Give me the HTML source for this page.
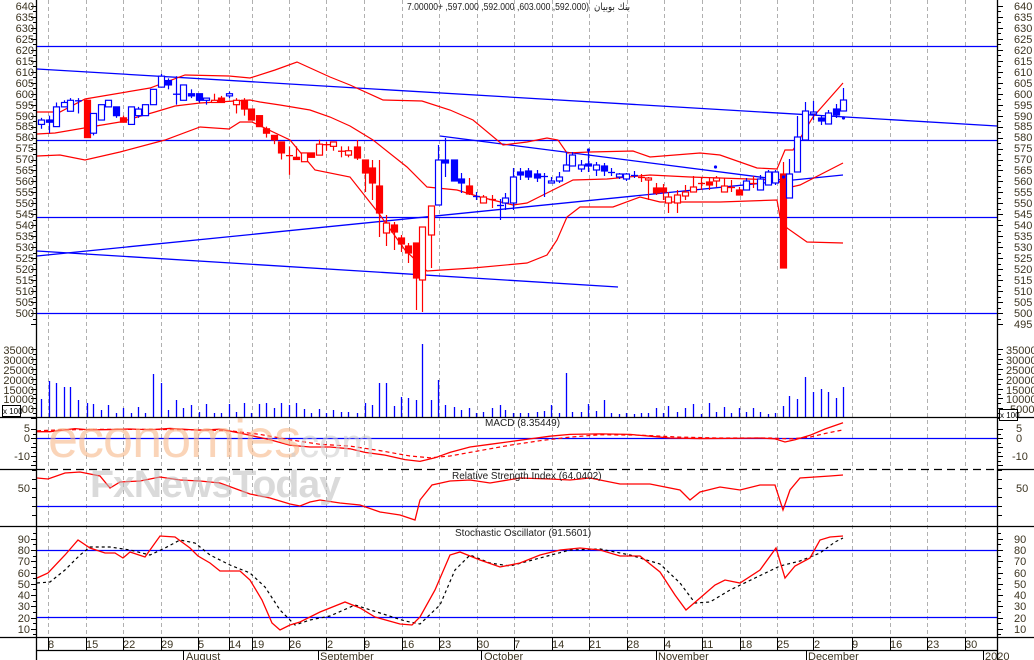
<!DOCTYPE html>
<html><head><meta charset="utf-8"><style>
html,body{margin:0;padding:0;background:#fff;width:1034px;height:660px;overflow:hidden}
svg{display:block;font-family:"Liberation Sans","DejaVu Sans",sans-serif}
.ax{font-size:11px;fill:#3b3320}
.al text{text-anchor:end}
.t{font-size:10px;fill:#222}
</style></head><body>
<svg id="s" width="1034" height="660" viewBox="0 0 1034 660" xmlns="http://www.w3.org/2000/svg">
<rect width="1034" height="660" fill="#fff"/>
<g id="grid"></g>
<g id="lines"></g>
<g id="cand"></g>
<g id="vol"></g>
<g id="ind"></g>
<!-- watermark -->
<text x="48" y="457" font-size="54" fill="#f7b98a" opacity="0.6" font-family="Liberation Sans,sans-serif" letter-spacing="-1">economies</text>
<text x="288" y="457" font-size="40" fill="#cfcfcf" opacity="0.6" font-family="Liberation Sans,sans-serif">.com</text>
<text x="90" y="497" font-size="38" fill="#bdbdbd" opacity="0.55" font-family="Liberation Sans,sans-serif" font-weight="bold" letter-spacing="-1" textLength="250" lengthAdjust="spacingAndGlyphs">FxNewsToday</text>
<!-- axes -->
<g stroke="#000" stroke-width="1.3" fill="none">
<line x1="36.5" y1="0" x2="36.5" y2="660"/>
<line x1="997.5" y1="0" x2="997.5" y2="660"/>
<line x1="0" y1="417.5" x2="1034" y2="417.5"/>
<line x1="0" y1="526.5" x2="1034" y2="526.5"/>
<line x1="0" y1="637.5" x2="1034" y2="637.5"/>
<line x1="37" y1="650.5" x2="997" y2="650.5"/>
<line x1="0" y1="469.5" x2="37" y2="469.5"/>
<line x1="997" y1="469.5" x2="1034" y2="469.5"/>
<line x1="37" y1="469.5" x2="997" y2="469.5" stroke-dasharray="8,5"/>
</g>
<g id="ticks"></g>
<!-- title -->
<text x="407" y="10" class="t" font-size="10" textLength="182" lengthAdjust="spacingAndGlyphs">7.00000+ ,597.000 ,592.000 ,603.000 ,592.000)</text>
<text x="594" y="10" class="t" font-size="9" font-family="DejaVu Sans,sans-serif" textLength="36" lengthAdjust="spacingAndGlyphs">بنك بوبيان</text>
<text x="485" y="426" class="t">MACD (8.35449)</text>
<text x="452" y="479" class="t">Relative Strength Index (64.0402)</text>
<text x="455" y="536" class="t">Stochastic Oscillator (91.5601)</text>
<!-- left price labels -->
<g class="ax al">
<text x="34" y="10">640</text><text x="34" y="21">635</text><text x="34" y="32">630</text><text x="34" y="43">625</text><text x="34" y="54">620</text><text x="34" y="65">615</text><text x="34" y="76">610</text><text x="34" y="87">605</text><text x="34" y="98">600</text><text x="34" y="109">595</text><text x="34" y="120">590</text><text x="34" y="130">585</text><text x="34" y="141">580</text><text x="34" y="152">575</text><text x="34" y="163">570</text><text x="34" y="174">565</text><text x="34" y="185">560</text><text x="34" y="196">555</text><text x="34" y="207">550</text><text x="34" y="218">545</text><text x="34" y="229">540</text><text x="34" y="240">535</text><text x="34" y="251">530</text><text x="34" y="262">525</text><text x="34" y="273">520</text><text x="34" y="284">515</text><text x="34" y="295">510</text><text x="34" y="306">505</text><text x="34" y="317">500</text>
<text x="34" y="354">35000</text><text x="34" y="364">30000</text><text x="34" y="374">25000</text><text x="34" y="384">20000</text><text x="34" y="394">15000</text><text x="34" y="403">10000</text><text x="34" y="413">5000</text>
<text x="30" y="432">5</text><text x="30" y="442">0</text><text x="30" y="460">-10</text>
<text x="30" y="492">50</text>
<text x="30" y="543">90</text><text x="30" y="554">80</text><text x="30" y="565">70</text><text x="30" y="577">60</text><text x="30" y="588">50</text><text x="30" y="599">40</text><text x="30" y="610">30</text><text x="30" y="622">20</text><text x="30" y="633">10</text>
</g>
<g class="ax">
<text x="1014" y="10">640</text><text x="1014" y="21">635</text><text x="1014" y="32">630</text><text x="1014" y="43">625</text><text x="1014" y="54">620</text><text x="1014" y="65">615</text><text x="1014" y="76">610</text><text x="1014" y="87">605</text><text x="1014" y="98">600</text><text x="1014" y="109">595</text><text x="1014" y="120">590</text><text x="1014" y="130">585</text><text x="1014" y="141">580</text><text x="1014" y="152">575</text><text x="1014" y="163">570</text><text x="1014" y="174">565</text><text x="1014" y="185">560</text><text x="1014" y="196">555</text><text x="1014" y="207">550</text><text x="1014" y="218">545</text><text x="1014" y="229">540</text><text x="1014" y="240">535</text><text x="1014" y="251">530</text><text x="1014" y="262">525</text><text x="1014" y="273">520</text><text x="1014" y="284">515</text><text x="1014" y="295">510</text><text x="1014" y="306">505</text><text x="1014" y="317">500</text><text x="1014" y="328">495</text>
<text x="1006" y="354">35000</text><text x="1006" y="364">30000</text><text x="1006" y="374">25000</text><text x="1006" y="384">20000</text><text x="1006" y="394">15000</text><text x="1006" y="403">10000</text><text x="1010" y="413">5000</text>
<text x="1016" y="432">5</text><text x="1016" y="442">0</text><text x="1012" y="460">-10</text>
<text x="1016" y="492">50</text>
<text x="1014" y="543">90</text><text x="1014" y="554">80</text><text x="1014" y="565">70</text><text x="1014" y="577">60</text><text x="1014" y="588">50</text><text x="1014" y="599">40</text><text x="1014" y="610">30</text><text x="1014" y="622">20</text><text x="1014" y="633">10</text>
</g>
<rect x="2.5" y="405.5" width="18" height="11" fill="#fff" stroke="#000"/>
<text x="3" y="414" font-size="8" fill="#000">x 100</text>
<rect x="999.5" y="409.5" width="18" height="11" fill="#fff" stroke="#000"/>
<text x="1000" y="418" font-size="8" fill="#000">x 100</text>
<!-- date axis -->
<g class="ax" font-size="11">
<text x="48" y="648">8</text><text x="86" y="648">15</text><text x="123" y="648">22</text><text x="161" y="648">29</text><text x="198" y="648">5</text><text x="229" y="648">14</text><text x="252" y="648">19</text><text x="289" y="648">26</text><text x="327" y="648">2</text><text x="364" y="648">9</text><text x="402" y="648">16</text><text x="439" y="648">23</text><text x="477" y="648">30</text><text x="514" y="648">7</text><text x="552" y="648">14</text><text x="589" y="648">21</text><text x="627" y="648">28</text><text x="665" y="648">4</text><text x="702" y="648">11</text><text x="740" y="648">18</text><text x="777" y="648">25</text><text x="814" y="648">2</text><text x="852" y="648">9</text><text x="890" y="648">16</text><text x="927" y="648">23</text><text x="965" y="648">30</text><text x="985" y="660">2020</text>
</g>
<g class="ax" font-size="10">
<text x="186" y="660">August</text><text x="320" y="660">September</text><text x="484" y="660">October</text><text x="658" y="660">November</text><text x="808" y="660">December</text>
</g>
<g id="dt" stroke="#000" stroke-width="1"></g>
</svg>
<script>
var NS="http://www.w3.org/2000/svg";
function el(p,t,a){var e=document.createElementNS(NS,t);for(var k in a)e.setAttribute(k,a[k]);document.getElementById(p).appendChild(e);return e;}
function P(p){return 6+(640-p)*2.193;}
var gx=[48,86,123,161,198,229,252,289,326,364,402,439,477,514,552,589,627,664,702,740,777,813,852,890,927,965];
gx.forEach(function(x){el("grid","line",{x1:x+.5,y1:0,x2:x+.5,y2:637,stroke:"#b0b0b0","stroke-dasharray":"4,3"});
 el("dt","line",{x1:x+.5,y1:637,x2:x+.5,y2:650});});
[183,318,481,656,806,983].forEach(function(x){el("dt","line",{x1:x+.5,y1:650,x2:x+.5,y2:660});});
function tk(y,len){el("ticks","line",{x1:36-len,y1:y,x2:37,y2:y,stroke:"#000"});el("ticks","line",{x1:997,y1:y,x2:998+len,y2:y,stroke:"#000"});}
for(var p=640;p>=495;p-=2.5)tk(Math.round(P(p))+.5,p%5==0?5:3);
for(var v=0;v<=35000;v+=2500)tk(Math.round(418-v*0.00196)+.5,v%5000==0?5:3);
for(var m=-15;m<=7;m+=2.5)tk(Math.round(438-m*1.8)+.5,m%5==0?5:3);
for(var r=20;r<=70;r+=10)tk(Math.round(533-r*0.9)+.5,4);
for(var s=5;s<=95;s+=5)tk(Math.round(640-s*1.125)+.5,s%10==0?5:3);
function pl(g,pts,col,w,dash){var a={points:pts.map(function(q){return q.join(",")}).join(" "),fill:"none",stroke:col,"stroke-width":w||1.3};if(dash)a["stroke-dasharray"]=dash;el(g,"polyline",a);}
var B="#0000ff",R="#ff0000";
[46,140,217,313].forEach(function(y){el("lines","line",{x1:37,y1:y+.5,x2:997,y2:y+.5,stroke:B,"stroke-width":1.3});});
pl("lines",[[37,69],[997,126]],B);
pl("lines",[[37,256],[843,175]],B);
pl("lines",[[37,251],[618,287]],B);
pl("lines",[[440,136],[783,180]],B);
pl("lines",[[37,112],[60,112],[85,99],[150,88],[185,75],[229,76],[250,78],[275,70],[297,62],[330,77],[350,85],[383,100],[422,101],[450,110],[473,120],[503,145],[527,142],[547,138],[558,140],[567,153],[590,152],[633,151],[650,157],[700,153],[720,155],[757,168],[777,169],[785,150],[793,150],[813,117],[843,83]],R,1.2);
pl("lines",[[37,134],[55,133],[90,127],[120,122],[155,112],[175,106],[200,103],[235,101],[250,100],[260,102],[280,105],[310,110],[330,117],[350,126],[373,140],[407,167],[427,187],[457,190],[480,197],[513,205],[527,203],[547,193],[573,180],[607,179],[650,175],[690,177],[720,178],[777,180],[787,188],[800,185],[843,163]],R,1.2);
pl("lines",[[37,156],[60,155],[85,160],[120,152],[165,140],[200,127],[229,129],[240,122],[252,122],[290,140],[315,170],[350,177],[380,215],[405,250],[427,271],[473,268],[527,263],[547,255],[557,240],[567,217],[580,207],[613,207],[640,197],[660,202],[720,202],[777,200],[780,217],[787,228],[807,242],[843,243]],R,1.2);
var A=[[41,588,586,589,584,"bh"],[49,588,587,590,582,"bf"],[56,594,585,596,585,"bh"],[64,596,594,597,594,"bh"],[70,597,592,598,592,"bh"],[78,597,597,598,591,"bc"],[87,597,580,597,580,"rf"],[93,591,582,591,581,"bh"],[101,595,588,595,588,"bh"],[108,597,594,597,594,"bh"],[116,594,590,594,589,"bf"],[123,589,587,590,587,"rf"],[131,594,586,594,586,"bh"],[138,593,590,594,589,"bh"],[145,595,590,595,590,"bh"],[153,602,595,602,595,"bh"],[161,608,603,609,603,"bh"],[168,606,604,607,602,"bf"],[176,600,600,608,595,"bc"],[183,604,597,604,597,"bh"],[191,600,599,602,598,"bf"],[199,600,597,600,596,"bf"],[206,598,597,598,595,"bh"],[214,597,596,600,596,"rh"],[221,598,596,599,596,"rf"],[229,600,599,601,598,"bh"],[236,597,595,598,591,"rh"],[244,597,593,598,590,"rf"],[251,593,588,593,588,"rf"],[259,590,585,590,585,"rf"],[266,584,582,585,580,"rf"],[274,581,579,581,577,"rf"],[281,578,573,578,570,"rf"],[289,572,572,576,563,"rc"],[296,571,570,576,570,"rf"],[304,573,569,573,569,"rh"],[311,573,571,573,571,"rf"],[319,577,572,579,572,"rh"],[326,577,577,578,574,"rc"],[333,578,576,578,574,"rh"],[341,574,574,576,571,"rc"],[348,574,572,576,571,"rh"]];
var C=[];A.forEach(function(a){C.push([a[0],P(a[1]),P(a[2]),P(a[3]),P(a[4]),a[5]]);});
var Bp=[[357,147,158,140,160,"rf"],[365,160,173,160,192,"rf"],[372,168,183,160,200,"rf"],[379,186,213,160,237,"rf"],[386,223,233,215,246,"rh"],[394,225,232,222,250,"rf"],[401,238,244,235,252,"rf"],[408,246,253,243,263,"rf"],[416,243,278,243,310,"rf"],[422,227,280,227,312,"rh"],[431,206,235,206,268,"rh"],[438,160,205,145,205,"bh"],[445,160,163,138,177,"bf"],[454,160,181,160,181,"bf"],[461,179,183,173,193,"bf"],[469,186,194,178,195,"rf"],[476,196,197,192,200,"bc"],[483,197,203,195,203,"rh"],[492,199,201,195,208,"rc"],[500,205,205,199,220,"bc"],[505,198,203,193,210,"bh"],[513,177,203,168,210,"bh"],[520,172,175,168,180,"bf"],[528,171,177,168,180,"bf"],[537,174,178,170,182,"bf"],[544,176,176,173,197,"bc"],[551,181,183,177,183,"bh"],[559,177,181,172,183,"bh"],[566,165,171,152,171,"bh"],[572,155,166,152,166,"bh"],[581,165,169,160,172,"bh"],[588,164,166,149,172,"bf"],[596,165,170,162,176,"bh"],[604,166,171,163,176,"bf"],[611,172,172,168,176,"bc"],[619,174,177,173,179,"bh"],[626,174,179,173,181,"bh"],[634,175,175,171,178,"bc"],[641,177,177,174,182,"rc"],[648,178,180,177,200,"rh"],[656,188,193,183,195,"rf"],[663,188,192,184,200,"rf"],[668,197,203,192,213,"rh"],[677,195,203,190,213,"rh"],[685,192,196,185,200,"rh"],[693,187,192,176,192,"rh"],[701,183,183,178,190,"rc"],[709,182,185,178,190,"rf"],[716,178,181,176,187,"rh"],[724,186,192,178,192,"rh"],[731,187,187,180,192,"rc"],[739,190,195,187,195,"rf"],[746,181,190,178,190,"bh"],[753,183,183,176,188,"rc"],[760,179,190,175,190,"bh"],[768,172,185,170,185,"bh"],[775,172,183,170,185,"bh"],[783,174,268,162,268,"rf"],[789,174,198,159,198,"bh"],[797,137,172,116,172,"bh"],[805,111,140,102,140,"bh"],[813,112,114,101,120,"bh"],[821,118,121,115,125,"bf"],[828,113,124,110,124,"bh"],[836,109,115,104,118,"bf"],[843,100,111,88,111,"bh"]];
C=C.concat(Bp);
C.forEach(function(c){var x=c[0],t=Math.min(c[1],c[2]),b=Math.max(c[1],c[2]),col=c[5][0]=="b"?B:R,k=c[5][1];
 el("cand","line",{x1:x+.5,y1:c[3],x2:x+.5,y2:c[4],stroke:col,"stroke-width":1.2});
 if(k=="c"||b-t<1.5){el("cand","line",{x1:x-3,y1:t+.5,x2:x+4,y2:t+.5,stroke:col,"stroke-width":1.3});if(k=="c")return;}
 el("cand","rect",{x:x-2.5,y:t,width:6,height:Math.max(b-t,2),fill:k=="f"?col:"#fff",stroke:col,"stroke-width":1.2});});
[[588,150],[715,167],[783,177],[843,118]].forEach(function(d){el("cand","circle",{cx:d[0]+.5,cy:d[1],r:1.6,fill:B});});
var V=[[41,399],[49,381],[56,383],[64,387],[70,387],[78,400],[87,403],[93,404],[101,410],[108,405],[116,413],[123,408],[131,413],[138,407],[145,413],[153,374],[161,383],[168,410],[176,400],[183,408],[191,405],[199,412],[206,404],[214,413],[221,413],[229,404],[236,412],[244,403],[251,413],[259,404],[266,403],[274,408],[281,403],[289,405],[296,403],[304,409],[311,413],[319,409],[326,413],[333,410],[341,412],[348,412],[357,413],[365,403],[372,405],[379,383],[386,383],[394,406],[401,397],[408,398],[416,400],[422,344],[431,400],[438,380],[445,405],[454,407],[461,410],[469,408],[476,413],[483,412],[492,408],[500,405],[505,410],[513,413],[520,413],[528,413],[537,412],[544,411],[551,405],[559,413],[566,373],[572,412],[581,412],[588,404],[596,411],[604,400],[611,413],[619,414],[626,413],[634,414],[641,413],[648,413],[656,408],[663,413],[668,406],[677,412],[685,408],[693,404],[701,414],[709,403],[716,412],[724,407],[731,413],[739,408],[746,412],[753,408],[760,412],[768,414],[775,413],[783,406],[789,396],[797,399],[805,377],[813,392],[821,389],[828,392],[836,398],[843,387]];
V.forEach(function(v){el("vol","line",{x1:v[0]+.5,y1:v[1],x2:v[0]+.5,y2:417,stroke:B,"stroke-width":1.3});});
el("ind","line",{x1:37,y1:438.5,x2:997,y2:438.5,stroke:B,"stroke-width":1.3});
function M(pts){return pts.map(function(q){return [q[0],438-q[1]*1.8];});}
pl("ind",M([[37,3.5],[50,3.5],[60,4.2],[75,5.2],[90,4.5],[110,4.7],[130,5],[150,4.6],[170,5.3],[200,4.3],[220,4.9],[235,3.3],[250,1.5],[270,-1],[290,-4],[310,-5],[330,-5],[350,-6],[365,-8],[385,-9.5],[405,-12],[420,-13],[435,-11],[450,-8],[470,-5],[490,-3.5],[510,-2],[530,-0.5],[550,1],[570,2],[600,2.3],[630,2],[650,1],[670,0],[700,-0.3],[730,-0.2],[760,0],[775,-0.5],[785,-2.2],[795,-1],[810,1.5],[825,5],[843,8.5]]),R,1.3);
pl("ind",M([[37,4],[60,4.5],[100,4.8],[150,4.8],[200,4.5],[230,4],[260,2],[290,-1],[320,-3.5],[350,-4.5],[380,-7],[410,-10],[430,-11],[450,-10],[480,-7],[510,-4],[540,-1.5],[570,0.5],[600,1.8],[640,1.6],[680,0.5],[720,0],[770,0],[790,-0.5],[810,0.5],[825,2.5],[843,4.5]]),R,1.2,"4,3");
el("ind","line",{x1:37,y1:506.5,x2:997,y2:506.5,stroke:B,"stroke-width":1.3});
pl("ind",[[37,478],[48,479],[65,473],[80,472],[100,476],[110,488],[120,482],[140,481],[160,477],[180,480],[200,481],[220,483],[250,494],[270,498],[290,504],[300,506],[310,502],[320,500],[340,503],[360,505],[380,512],[400,515],[415,520],[420,500],[432,485],[450,481],[470,480],[490,483],[520,478],[550,479],[570,480],[590,478],[620,484],[650,484],[680,490],[690,500],[700,492],[720,487],[740,490],[760,485],[775,485],[783,510],[790,490],[800,478],[830,476],[843,475]],R,1.3);
[550,617].forEach(function(y){el("ind","line",{x1:37,y1:y+.5,x2:997,y2:y+.5,stroke:B,"stroke-width":1.3});});
pl("ind",[[37,583],[50,582],[65,570],[80,555],[90,547],[110,547],[130,550],[150,555],[165,548],[180,540],[195,543],[210,555],[230,565],[250,573],[265,587],[280,610],[295,625],[310,620],[330,616],[355,605],[380,613],[405,621],[420,624],[440,605],[455,570],[470,555],[490,563],[510,566],[540,558],[570,550],[600,549],[630,555],[660,564],[680,583],[695,603],[710,602],[730,590],[755,578],[780,566],[800,561],[820,553],[835,542],[843,538]],"#000",1.2,"3,3");
pl("ind",[[37,578],[48,573],[65,555],[78,540],[90,548],[105,553],[115,553],[123,558],[130,552],[145,557],[160,536],[175,537],[190,548],[198,556],[210,563],[220,571],[240,571],[250,580],[262,600],[272,623],[280,630],[290,625],[300,622],[320,612],[345,602],[360,608],[375,617],[400,624],[412,625],[420,617],[435,590],[450,555],[460,552],[480,560],[500,567],[520,563],[540,555],[560,550],[580,548],[600,550],[620,556],[640,556],[660,572],[675,595],[686,610],[700,598],[715,585],[725,580],[740,583],[760,570],[776,548],[785,578],[795,566],[810,558],[820,540],[830,537],[843,536]],R,1.3);
</script>
</body></html>
